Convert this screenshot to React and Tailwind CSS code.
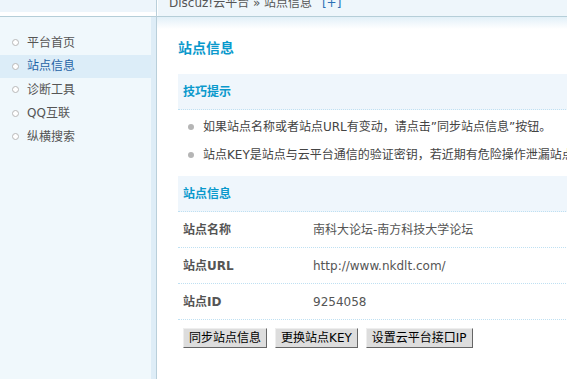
import React from "react";

const font = { fontFamily: "'DejaVu Sans', 'Noto Sans CJK SC', sans-serif" };

function Bullet() {
  return <span className="inline-block shrink-0 w-[7px] h-[7px] rounded-full border border-[#b8b8b8] bg-white mr-[8px]" />;
}

const menu = [
  { t: "平台首页" },
  { t: "站点信息", active: true },
  { t: "诊断工具" },
  { t: "QQ互联" },
  { t: "纵横搜索" },
];

function Row({ label, value }) {
  return (
    <div className="flex items-center h-[36px] border-b border-dotted border-[#bfe0f2]">
      <div className="w-[135px] shrink-0 pl-[5px] font-bold text-[#555]">{label}</div>
      <div className="text-[#555]">{value}</div>
    </div>
  );
}

export default function App() {
  return (
    <div className="flex w-[567px] h-[379px] overflow-hidden bg-white text-[12px] leading-none" style={font}>
      {/* sidebar */}
      <div className="w-[157px] shrink-0 flex flex-col border-r border-[#b9cfda]">
        <div className="h-[16px] flex flex-col shrink-0">
          <div className="h-[12px] bg-[#edf5fb]" />
          <div className="h-[4px] bg-white" />
        </div>
        <div className="h-[1px] bg-[#b5ced8]" />
        <div className="flex flex-1">
          <div className="w-[151px] bg-[#f0f8fc] pt-[14px] flex flex-col">
            {menu.map((m) => (
              <div
                key={m.t}
                className={
                  "flex items-center h-[23.5px] pl-[12px] " +
                  (m.active ? "bg-[#dcedf8] text-[#1f63a6]" : "text-[#555]")
                }
              >
                <Bullet />
                <span>{m.t}</span>
              </div>
            ))}
          </div>
          <div className="flex-1 bg-[#deedf7]" />
        </div>
      </div>
      {/* main */}
      <div className="flex-1 flex flex-col min-w-0">
        <div className="h-[16px] shrink-0 bg-[#eef6fb] border-l border-white overflow-hidden pl-[11px]">
          <div className="mt-[-3px] whitespace-nowrap text-[#555]">
            Discuz!云平台 » 站点信息 <span className="text-[#2a6fb5] ml-[6px]">[+]</span>
          </div>
        </div>
        <div className="h-[1px] bg-[#b5ced8] shrink-0" />
        <div className="flex-1 bg-gradient-to-b from-[#e2f0f8] to-white to-[12px] pl-[21px] whitespace-nowrap">
          <div className="h-[57px] flex items-center pt-[4px] text-[14px] font-bold text-[#0a99cc]">站点信息</div>
          <div className="w-[700px]">
            <div className="h-[36px] flex items-center pl-[5px] bg-[#eff6fc] border-b border-dotted border-[#bfe0f2] font-bold text-[#0a99cc]">
              技巧提示
            </div>
            <div className="pt-[3px] pb-[7px] text-[#444]">
              <div className="h-[28px] flex items-center pl-[10px]">
                <span className="shrink-0 w-[6px] h-[6px] rounded-full bg-[#b5b5b5] mr-[9px]" />
                <span>如果站点名称或者站点URL有变动，请点击”同步站点信息”按钮。</span>
              </div>
              <div className="h-[28px] flex items-center pl-[10px]">
                <span className="shrink-0 w-[6px] h-[6px] rounded-full bg-[#b5b5b5] mr-[9px]" />
                <span>站点KEY是站点与云平台通信的验证密钥，若近期有危险操作泄漏站点KEY等信息，请点击“更换站点KEY”按钮。</span>
              </div>
            </div>
            <div className="h-[36px] flex items-center pl-[5px] bg-[#eff6fc] border-b border-dotted border-[#bfe0f2] font-bold text-[#0a99cc]">
              站点信息
            </div>
            <Row label="站点名称" value="南科大论坛-南方科技大学论坛" />
            <Row label="站点URL" value="http://www.nkdlt.com/" />
            <Row label="站点ID" value="9254058" />
            <div className="flex gap-[8px] pl-[5px] pt-[8px]">
              {["同步站点信息", "更换站点KEY", "设置云平台接口IP"].map((b) => (
                <button
                  key={b}
                  className="h-[20px] px-[5px] bg-[#dddddd] text-black border border-t-[#eee] border-l-[#eee] border-r-[#666] border-b-[#666]"
                >
                  {b}
                </button>
              ))}
            </div>
          </div>
        </div>
      </div>
    </div>
  );
}
